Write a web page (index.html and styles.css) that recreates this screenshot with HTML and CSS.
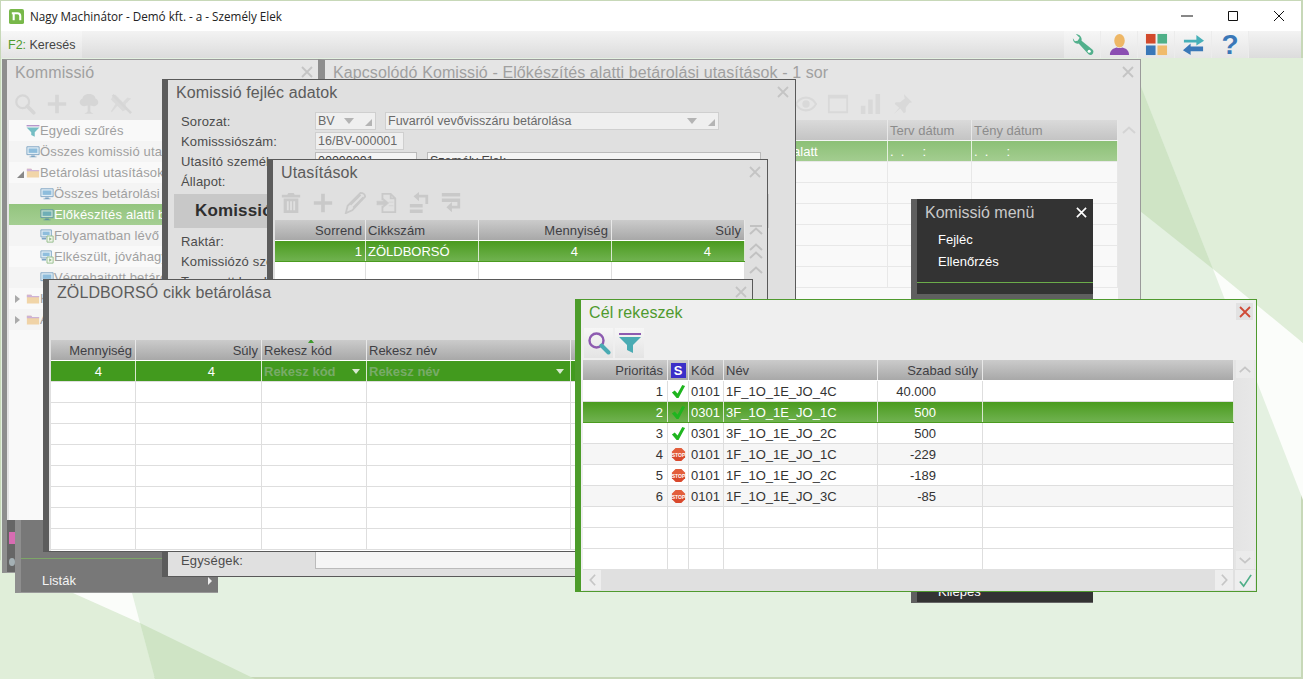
FILE: index.html
```html
<!DOCTYPE html>
<html lang="hu">
<head>
<meta charset="utf-8">
<title>Nagy Machinátor</title>
<link rel="stylesheet" href="styles.css">
</head>
<body>
<svg class="defs" aria-hidden="true">
  <symbol id="i-search" viewBox="0 0 24 24"><circle cx="9.5" cy="9.5" r="7" fill="none" stroke="currentColor" stroke-width="2.4"/><path d="M14.5 14.5l7 7" stroke="currentColor" stroke-width="4" stroke-linecap="round"/></symbol>
  <symbol id="i-plus" viewBox="0 0 24 24"><path d="M10 2h4v8h8v4h-8v8h-4v-8H2v-4h8z" fill="currentColor"/></symbol>
  <symbol id="i-tree" viewBox="0 0 24 24"><path d="M12 1c5 0 7 3 7 5 2.500 1 3.500 3 3 5-.5 3-4 4-7 3l-1.500-.5V20c0 1 1.500 1.500 3.500 2.500H7c2-1 3.500-1.500 3.500-2.500v-6.500L9 14c-3 1-6.500 0-7-3-.5-2 .5-4 3-5 0-2 2-5 7-5z" fill="currentColor"/></symbol>
  <symbol id="i-pinoff" viewBox="0 0 24 24"><path d="M2 3l2-2 20 20-2 2z" fill="currentColor"/><path d="M6 2l8 8 5-5 4 1-6 6 1 6-4 2-6-6-6 7-1-1 5-8-5-5 2-4z" fill="currentColor" opacity=".75"/></symbol>
  <symbol id="i-trash" viewBox="0 0 24 24"><path d="M8 3l1-2h6l1 2h6v3H2V3zM4 7h16v16H4zM7.500 10v10h2V10zm3.500 0v10h2V10zm3.500 0v10h2V10z" fill="currentColor" fill-rule="evenodd"/></symbol>
  <symbol id="i-pencil" viewBox="0 0 24 24"><path d="M18 1c3 0 5 2 5 4L9 20l-7 3 2-8z" fill="none" stroke="currentColor" stroke-width="2"/><path d="M7 14L18 3M10 17L21 6" stroke="currentColor" stroke-width="2"/></symbol>
  <symbol id="i-export" viewBox="0 0 24 24"><path d="M7 9V2h9l5 5v15H7v-7M16 2v5h5" fill="none" stroke="currentColor" stroke-width="2"/><path d="M1 10h7V7l6 5-6 5v-3H1zM14 11h5M14 15h5" fill="currentColor" stroke="currentColor" stroke-width=".5"/></symbol>
  <symbol id="i-swapl" viewBox="0 0 24 24"><path d="M2 13h14v4H2zM2 19h14v4H2z" fill="currentColor"/><path d="M22 3v10h-3V6h-7v4L6 4.500 12 0v3z" fill="currentColor"/></symbol>
  <symbol id="i-swapr" viewBox="0 0 24 24"><path d="M2 1h20v4H2zM2 7h20v4H2z" fill="currentColor"/><path d="M22 11v7H13v4l-6-5.500L13 11v4h6v-4z" fill="currentColor"/></symbol>
  <symbol id="i-eye" viewBox="0 0 24 24"><path d="M1 12c3-5 7-7 11-7s8 2 11 7c-3 5-7 7-11 7S4 17 1 12z" fill="none" stroke="currentColor" stroke-width="2.400"/><circle cx="12" cy="12" r="4" fill="currentColor"/></symbol>
  <symbol id="i-rect" viewBox="0 0 24 24"><path d="M2 3h20v18H2z" fill="none" stroke="currentColor" stroke-width="2"/><path d="M2 3h20v3H2z" fill="currentColor"/></symbol>
  <symbol id="i-bars" viewBox="0 0 24 24"><path d="M2 14h5v9H2zM10 7h5v16h-5zM18 1h5v22h-5z" fill="currentColor"/></symbol>
  <symbol id="i-pin" viewBox="0 0 24 24"><path d="M14 1l9 9-3 1-4 5 0 5-2 1-4-5-7 6 6-7-5-4 1-2 5 0 5-4z" fill="currentColor"/></symbol>
  <symbol id="i-funnel" viewBox="0 0 24 24"><path d="M1 2h22v2H1z" fill="#8d5bb0"/><path d="M1 6h22l-8 8v8l-6-3v-5z" fill="#4aabb3"/></symbol>
  <symbol id="i-check" viewBox="0 0 16 16"><path d="M1 9l3-2 3 3 5-9 3 1-7 13h-2z" fill="#1fb51f"/></symbol>
  <symbol id="i-stop" viewBox="0 0 16 16"><path d="M5 1h6l4 4v6l-4 4H5l-4-4V5z" fill="#d9482c"/><path d="M5 1h6l4 4v3H1V5z" fill="#ef7a50" opacity=".45"/><text x="8" y="10.200" text-anchor="middle" class="stoptext">STOP</text></symbol>
  <symbol id="i-mon" viewBox="0 0 16 16"><path d="M1 2h14v9H1z" fill="#d8eaf5" stroke="#3b78a8"/><path d="M3 4h10v5H3z" fill="#58a0d0"/><path d="M6 12h4v1h2v1H4v-1h2z" fill="#3b78a8"/></symbol>
  <symbol id="i-monp" viewBox="0 0 16 16"><path d="M1 1h12v8H1z" fill="#d8eaf5" stroke="#3b78a8"/><path d="M3 3h8v4H3z" fill="#58a0d0"/><path d="M2 10h5v2H2z" fill="#3b78a8"/><path d="M8 8h7v7H8z" fill="#eef6e8" stroke="#5a9a4a"/><path d="M10.500 9.500l3 2-3 2z" fill="#5a9a4a"/></symbol>
  <symbol id="i-folder" viewBox="0 0 16 16"><path d="M1 3h5l1 1.500h8V13H1z" fill="#eec27e"/><path d="M1 3h5l1 1.500h8V6H1z" fill="#b98fc5"/></symbol>
  <symbol id="i-x" viewBox="0 0 12 12"><path d="M1 1l10 10M11 1L1 11" fill="none" stroke="currentColor" stroke-width="1.800"/></symbol>
  <symbol id="i-up" viewBox="0 0 16 10"><path d="M2 8l6-5.500L14 8" fill="none" stroke="currentColor" stroke-width="2"/></symbol>
  <symbol id="i-down" viewBox="0 0 16 10"><path d="M2 2l6 5.500L14 2" fill="none" stroke="currentColor" stroke-width="2"/></symbol>
  <symbol id="i-left" viewBox="0 0 10 16"><path d="M8 2L2.500 8 8 14" fill="none" stroke="currentColor" stroke-width="2"/></symbol>
  <symbol id="i-right" viewBox="0 0 10 16"><path d="M2 2l5.500 6L2 14" fill="none" stroke="currentColor" stroke-width="2"/></symbol>
  <symbol id="i-tick" viewBox="0 0 16 16"><path d="M2 9l4 5L14 2" fill="none" stroke="#4fae88" stroke-width="1.800"/></symbol>
  <symbol id="i-tri" viewBox="0 0 10 6"><path d="M0 0h10L5 6z" fill="currentColor"/></symbol>
  <symbol id="i-cor" viewBox="0 0 8 8"><path d="M8 0v8H0z" fill="currentColor"/></symbol>
</svg>

<div class="app">
  <div class="screen">
    <svg class="wallpaper" viewBox="0 0 1303 679" aria-hidden="true">
      <path d="M1140 58h163v285l-90-74-73-185z" fill="#e0eed9"/>
      <path d="M1140 84l73 185-73-58z" fill="#cfe4c5"/>
      <path d="M1213 269l90 74v157z" fill="#fbfdfa"/>
      <path d="M0 560l140 63 15 56H0z" fill="#e0eed9"/>
      <path d="M73 593h59l8 30z" fill="#fbfdfa"/>
      <path d="M140 623l115 56H155z" fill="#cfe4c5"/>
    </svg>

    <header class="titlebar">
      <svg class="logo" viewBox="0 0 16 16"><rect width="16" height="16" rx="2" fill="#78b84a"/><path d="M3 4.500h3M5 12V4.500h4c2 0 3 1 3 3V12" fill="none" stroke="#fff" stroke-width="2.200"/></svg>
      <span class="apptitle">Nagy Machinátor - Demó kft. - a - Személy Elek</span>
      <div class="winctl">
        <svg class="ctl" viewBox="0 0 12 12"><path d="M0 6h12" stroke="#111" fill="none"/></svg>
        <svg class="ctl" viewBox="0 0 12 12"><path d="M1.500 1.500h9v9h-9z" stroke="#111" fill="none"/></svg>
        <svg class="ctl" viewBox="0 0 12 12"><path d="M1 1l10 10M11 1L1 11" stroke="#111" fill="none"/></svg>
      </div>
    </header>

    <nav class="toolbar">
      <div class="f2"><span class="f2key">F2:</span> Keresés</div>
      <div class="tools">
        <div class="tool"><svg class="toolic" viewBox="0 0 24 24"><path d="M2 6c0 3 3 6 6 5l10 11c2 1.500 4 1 5-1s0-3-1-4L11 8c1-3-2-7-6-7l4 4-2 3-3 .5-2-3z" fill="#52b08c"/><circle cx="19" cy="19" r="1.600" fill="#fff"/></svg></div>
        <div class="tool"><svg class="toolic" viewBox="0 0 24 24"><ellipse cx="12" cy="8" rx="5.500" ry="7" fill="#eeb766"/><path d="M2 23c0-5 3-7 7-8 2 1 4 1 6 0 4 1 7 3 7 8z" fill="#8b4fb2"/></svg></div>
        <div class="tool"><svg class="toolic" viewBox="0 0 24 24"><path d="M1 1h10v10H1z" fill="#d24a2c"/><path d="M13 1h10v10H13z" fill="#4fb088"/><path d="M1 13h10v10H1z" fill="#3a78b8"/><path d="M13 13h10v10H13z" fill="#f0bb6c"/></svg></div>
        <div class="tool"><svg class="toolic" viewBox="0 0 24 24"><path d="M2 7h13V2l8 6-8 5V10H2z" fill="#46b0b8"/><path d="M22 14H9v-3l-8 7 8 5v-4h13z" fill="#3a78b8"/></svg></div>
        <div class="tool"><span class="qmark">?</span></div>
      </div>
    </nav>

    <section class="win dim w-kom">
      <h2 class="win-title">Kommissió</h2>
      <svg class="close"><use href="#i-x"/></svg>
      <div class="iconbar iconbar-kom">
        <svg class="ib"><use href="#i-search"/></svg>
        <svg class="ib"><use href="#i-plus"/></svg>
        <svg class="ib"><use href="#i-tree"/></svg>
        <svg class="ib"><use href="#i-pinoff"/></svg>
      </div>
      <ul class="tree">
        <li class="node l1"><svg class="ni ni-f"><use href="#i-funnel"/></svg>Egyedi szűrés</li>
        <li class="node l1"><svg class="ni"><use href="#i-mon"/></svg>Összes komissió utasítás</li>
        <li class="node l1"><span class="exp open"></span><svg class="ni"><use href="#i-folder"/></svg>Betárolási utasítások</li>
        <li class="node l2"><svg class="ni"><use href="#i-mon"/></svg>Összes betárolási utasítás</li>
        <li class="node l2 sel"><svg class="ni"><use href="#i-mon"/></svg>Előkészítés alatti betárolási</li>
        <li class="node l2"><svg class="ni"><use href="#i-monp"/></svg>Folyamatban lévő betárolási</li>
        <li class="node l2"><svg class="ni"><use href="#i-monp"/></svg>Elkészült, jóváhagyott</li>
        <li class="node l2"><svg class="ni"><use href="#i-mon"/></svg>Végrehajtott betárolási</li>
        <li class="node l1"><span class="exp"></span><svg class="ni"><use href="#i-folder"/></svg>Kiadási utasítások</li>
        <li class="node l1"><span class="exp"></span><svg class="ni"><use href="#i-folder"/></svg>Áttárolási utasítások</li>
      </ul>
      <div class="kom-foot">
        <span class="foot-a"></span>
        <span class="foot-b"></span>
      </div>
    </section>

    <section class="win dim w-kap">
      <h2 class="win-title">Kapcsolódó Komissió - Előkészítés alatti betárolási utasítások - 1 sor</h2>
      <svg class="close"><use href="#i-x"/></svg>
      <div class="iconbar iconbar-kap">
        <svg class="ib"><use href="#i-eye"/></svg>
        <svg class="ib"><use href="#i-rect"/></svg>
        <svg class="ib"><use href="#i-bars"/></svg>
        <svg class="ib"><use href="#i-pin"/></svg>
      </div>
      <div class="gridwrap">
        <div class="grid g-kap">
          <div class="row head"><div class="c"></div><div class="c"></div><div class="c">Terv dátum</div><div class="c">Tény dátum</div></div>
          <div class="row sel-soft"><div class="c"></div><div class="c">Előkészítés alatt</div><div class="c pre">.  .     :</div><div class="c pre">.  .     :</div></div>
          <div class="row"><div class="c"></div><div class="c"></div><div class="c"></div><div class="c"></div></div>
          <div class="row"><div class="c"></div><div class="c"></div><div class="c"></div><div class="c"></div></div>
          <div class="row"><div class="c"></div><div class="c"></div><div class="c"></div><div class="c"></div></div>
          <div class="row"><div class="c"></div><div class="c"></div><div class="c"></div><div class="c"></div></div>
          <div class="row"><div class="c"></div><div class="c"></div><div class="c"></div><div class="c"></div></div>
          <div class="row"><div class="c"></div><div class="c"></div><div class="c"></div><div class="c"></div></div>
        </div>
        <div class="vscroll"><svg class="sb-ic"><use href="#i-up"/></svg></div>
      </div>
    </section>

    <aside class="darkmenu w-komenu">
      <div class="dm-head"><span>Komissió menü</span><svg class="dm-x"><use href="#i-x"/></svg></div>
      <div class="dm-item">Fejléc</div>
      <div class="dm-item">Ellenőrzés</div>
      <div class="dm-line"></div>
      <div class="dm-band"></div>
      <div class="dm-item dm-last">Kilépés</div>
    </aside>

    <aside class="w-listak">
      <div class="list-line"></div>
      <div class="list-item"><span>Listák</span><span class="list-arrow"></span></div>
    </aside>

    <section class="win dark w-fej">
      <h2 class="win-title">Komissió fejléc adatok</h2>
      <svg class="close"><use href="#i-x"/></svg>
      <div class="form">
        <div class="frow"><label class="flabel">Sorozat:</label><span class="fld sel-fld f-bv">BV<svg class="tri"><use href="#i-tri"/></svg><svg class="cor"><use href="#i-cor"/></svg></span><span class="fld sel-fld f-fuv">Fuvarról vevővisszáru betárolása<svg class="tri"><use href="#i-tri"/></svg><svg class="cor"><use href="#i-cor"/></svg></span></div>
        <div class="frow"><label class="flabel">Komisssiószám:</label><span class="fld f-sz">16/BV-000001</span></div>
        <div class="frow"><label class="flabel">Utasító személy:</label><span class="fld f-ut">00000001</span><span class="fld f-nev">Személy Elek</span></div>
        <div class="frow"><label class="flabel">Állapot:</label></div>
        <div class="banner">Komissió</div>
        <div class="frow"><label class="flabel">Raktár:</label></div>
        <div class="frow"><label class="flabel">Komissiózó személy:</label></div>
        <div class="frow"><label class="flabel">Tervezett kezdés:</label></div>
        <div class="frow frow-end"><label class="flabel">Egységek:</label><span class="fld f-egy"></span></div>
      </div>
    </section>

    <section class="win dark w-uta">
      <h2 class="win-title">Utasítások</h2>
      <svg class="close"><use href="#i-x"/></svg>
      <div class="iconbar iconbar-uta">
        <svg class="ib"><use href="#i-trash"/></svg>
        <svg class="ib"><use href="#i-plus"/></svg>
        <svg class="ib"><use href="#i-pencil"/></svg>
        <svg class="ib"><use href="#i-export"/></svg>
        <svg class="ib"><use href="#i-swapl"/></svg>
        <svg class="ib"><use href="#i-swapr"/></svg>
      </div>
      <div class="gridwrap">
        <div class="grid g-uta">
          <div class="row head"><div class="c r">Sorrend</div><div class="c">Cikkszám</div><div class="c r">Mennyiség</div><div class="c r">Súly</div></div>
          <div class="row sel"><div class="c r">1</div><div class="c">ZÖLDBORSÓ</div><div class="c r pad4">4</div><div class="c r pad4">4</div></div>
          <div class="row"><div class="c"></div><div class="c"></div><div class="c"></div><div class="c"></div></div>
          <div class="row"><div class="c"></div><div class="c"></div><div class="c"></div><div class="c"></div></div>
        </div>
        <div class="vscroll vs-uta">
          <span class="vs-top"><svg class="sb-ic"><use href="#i-up"/></svg></span>
          <span class="vs-dbl"><svg class="sb-ic"><use href="#i-up"/></svg><svg class="sb-ic"><use href="#i-up"/></svg></span>
          <svg class="sb-ic"><use href="#i-up"/></svg>
        </div>
      </div>
    </section>

    <section class="win dark w-zol">
      <h2 class="win-title">ZÖLDBORSÓ cikk betárolása</h2>
      <svg class="close"><use href="#i-x"/></svg>
      <div class="spacer-zol"></div>
      <div class="grid g-zol">
        <div class="row head"><div class="c r">Mennyiség</div><div class="c r">Súly</div><div class="c">Rekesz kód<span class="sortmark"></span></div><div class="c">Rekesz név</div><div class="c"></div></div>
        <div class="row sel-solid"><div class="c r pad30">4</div><div class="c r pad46">4</div><div class="c editc"><b>Rekesz kód</b><svg class="tri"><use href="#i-tri"/></svg></div><div class="c editc"><b>Rekesz név</b><svg class="tri"><use href="#i-tri"/></svg></div><div class="c"></div></div>
        <div class="row"><div class="c"></div><div class="c"></div><div class="c"></div><div class="c"></div><div class="c"></div></div>
        <div class="row"><div class="c"></div><div class="c"></div><div class="c"></div><div class="c"></div><div class="c"></div></div>
        <div class="row"><div class="c"></div><div class="c"></div><div class="c"></div><div class="c"></div><div class="c"></div></div>
        <div class="row"><div class="c"></div><div class="c"></div><div class="c"></div><div class="c"></div><div class="c"></div></div>
        <div class="row"><div class="c"></div><div class="c"></div><div class="c"></div><div class="c"></div><div class="c"></div></div>
        <div class="row"><div class="c"></div><div class="c"></div><div class="c"></div><div class="c"></div><div class="c"></div></div>
        <div class="row"><div class="c"></div><div class="c"></div><div class="c"></div><div class="c"></div><div class="c"></div></div>
        <div class="row"><div class="c"></div><div class="c"></div><div class="c"></div><div class="c"></div><div class="c"></div></div>
      </div>
    </section>

    <section class="win active w-cel">
      <h2 class="win-title">Cél rekeszek</h2>
      <span class="close-btn"><svg class="close-red"><use href="#i-x"/></svg></span>
      <div class="btnbar">
        <span class="btn"><svg class="btn-ic" viewBox="0 0 24 24"><circle cx="9.500" cy="9.500" r="7" fill="none" stroke="#8d5bb0" stroke-width="2.400"/><path d="M14.500 14.500l7 7" stroke="#4aabb3" stroke-width="4" stroke-linecap="round"/></svg></span>
        <span class="btn"><svg class="btn-ic"><use href="#i-funnel"/></svg></span>
      </div>
      <div class="gridwrap">
        <div class="grid g-cel">
          <div class="row head"><div class="c r">Prioritás</div><div class="c ctr"><span class="sbadge">S</span></div><div class="c">Kód</div><div class="c">Név</div><div class="c r">Szabad súly</div><div class="c"></div></div>
          <div class="row"><div class="c r">1</div><div class="c ctr"><svg class="st"><use href="#i-check"/></svg></div><div class="c">0101</div><div class="c">1F_1O_1E_JO_4C</div><div class="c r pad46">40.000</div><div class="c"></div></div>
          <div class="row sel"><div class="c r">2</div><div class="c ctr"><svg class="st"><use href="#i-check"/></svg></div><div class="c">0301</div><div class="c">3F_1O_1E_JO_1C</div><div class="c r pad46">500</div><div class="c"></div></div>
          <div class="row"><div class="c r">3</div><div class="c ctr"><svg class="st"><use href="#i-check"/></svg></div><div class="c">0301</div><div class="c">3F_1O_1E_JO_2C</div><div class="c r pad46">500</div><div class="c"></div></div>
          <div class="row alt"><div class="c r">4</div><div class="c ctr"><svg class="st"><use href="#i-stop"/></svg></div><div class="c">0101</div><div class="c">1F_1O_1E_JO_1C</div><div class="c r pad46">-229</div><div class="c"></div></div>
          <div class="row"><div class="c r">5</div><div class="c ctr"><svg class="st"><use href="#i-stop"/></svg></div><div class="c">0101</div><div class="c">1F_1O_1E_JO_2C</div><div class="c r pad46">-189</div><div class="c"></div></div>
          <div class="row alt"><div class="c r">6</div><div class="c ctr"><svg class="st"><use href="#i-stop"/></svg></div><div class="c">0101</div><div class="c">1F_1O_1E_JO_3C</div><div class="c r pad46">-85</div><div class="c"></div></div>
          <div class="row"><div class="c"></div><div class="c"></div><div class="c"></div><div class="c"></div><div class="c"></div><div class="c"></div></div>
          <div class="row"><div class="c"></div><div class="c"></div><div class="c"></div><div class="c"></div><div class="c"></div><div class="c"></div></div>
          <div class="row"><div class="c"></div><div class="c"></div><div class="c"></div><div class="c"></div><div class="c"></div><div class="c"></div></div>
        </div>
        <div class="vscroll vs-cel">
          <span class="sb-btn"><svg class="sb-ic"><use href="#i-up"/></svg></span>
          <span class="sb-btn"><svg class="sb-ic"><use href="#i-down"/></svg></span>
        </div>
      </div>
      <div class="hscroll">
        <span class="sb-btn sb-h"><svg class="sb-ih"><use href="#i-left"/></svg></span>
        <span class="sb-btn sb-h sb-push"><svg class="sb-ih"><use href="#i-right"/></svg></span>
        <span class="sb-btn sb-ok"><svg class="sb-tick"><use href="#i-tick"/></svg></span>
      </div>
    </section>
  </div>
</div>
</body>
</html>
```
FILE: styles.css
```css
* { box-sizing: border-box; }
html, body { margin: 0; padding: 0; height: 100%; overflow: hidden; }
body { font-family: "Liberation Sans", Arial, sans-serif; font-size: 13px; color: #333; background: #c7d8b8; }
.defs { position: absolute; width: 0; height: 0; overflow: hidden; }
.stoptext { font-family: "Liberation Sans", Arial, sans-serif; font-size: 5.4px; font-weight: bold; fill: #fff; }

.app { width: 1303px; height: 679px; padding: 1px 2px 2px 1px; background: #c7d8b8; position: relative; }
.screen { width: 100%; height: 100%; display: flex; flex-direction: column; background: #e4f1e1; }
.wallpaper { position: absolute; left: 0; top: 0; width: 1303px; height: 679px; }

.titlebar { position: relative; height: 30px; background: #fff; display: flex; align-items: center; padding-left: 8px; flex: none; }
.logo { width: 15px; height: 15px; margin-right: 6px; }
.apptitle { font-family: "Open Sans", sans-serif; font-size: 11.7px; color: #222; }
.winctl { margin-left: auto; display: flex; align-items: center; margin-right: 16px; gap: 34px; }
.ctl { width: 12px; height: 12px; display: block; }

.toolbar { position: relative; height: 27px; flex: none; display: flex; align-items: stretch; background: linear-gradient(#f3f3f3, #dcdcdc); }
.f2 { width: 81px; padding-left: 7px; line-height: 28px; font-size: 12.5px; color: #444; background: linear-gradient(#f7f7f7, #e4e4e4); }
.f2key { color: #4f9a2e; }
.tools { margin-left: auto; margin-right: 52px; display: flex; }
.tool { width: 37px; height: 27px; display: flex; align-items: center; justify-content: center; background: linear-gradient(#f6f6f6, #e6e6e6); border-right: 1px solid #ececec; }
.toolic { width: 23px; height: 23px; }
.qmark { font-weight: bold; font-size: 28px; line-height: 27px; color: #3a78b8; }

.win { position: absolute; overflow: hidden; display: flex; flex-direction: column; border-style: solid; border-width: 1px; }
.win-title { margin: 0; font-weight: normal; font-size: 16px; line-height: 25px; padding: 0 0 0 8px; height: 26px; flex: none; white-space: nowrap; letter-spacing: 0.1px; }
.close { position: absolute; top: 6px; right: 6px; width: 12px; height: 12px; color: #c4c4c4; }

.dim { background: #e5e5e5; border-color: #9a9a9a; border-left: 7px solid #8e8e8e; color: #a0a0a0; }
.dark { background: #e0e0e0; border-color: #595959; border-left: 6px solid #5c5c5c; color: #4c4c4c; }
.dark .win-title { color: #5c5c5c; }
.active { background: #efefef; border-color: #4f9a2e; border-left: 6px solid #4c9c2a; color: #333; }
.active .win-title { color: #4f9a2e; }

.w-kom { left: 2px; top: 59px; width: 317px; height: 514px; border-left-width: 5px; border-right: 0; }
.w-kap { left: 318px; top: 59px; width: 823px; height: 516px; }
.w-fej { left: 162px; top: 79px; width: 634px; height: 498px; }
.w-uta { left: 267px; top: 159px; width: 501px; height: 200px; }
.w-zol { left: 43px; top: 279px; width: 710px; height: 273px; }
.w-cel { left: 575px; top: 299px; width: 682px; height: 293px; }
.w-komenu { position: absolute; left: 911px; top: 199px; width: 182px; height: 404px; }
.w-listak { position: absolute; left: 15px; top: 520px; width: 203px; height: 73px; background: #787878; border-left: 6px solid #8e8e8e; border-bottom: 1px solid #999; display: flex; flex-direction: column; justify-content: flex-end; }
.w-zol .close { right: 5px; }

.iconbar { display: flex; flex: none; color: #d6d6d6; }
.ib { width: 22px; height: 22px; margin-right: 10px; }
.iconbar-kom { height: 34px; padding: 7px 0 0 7px; }
.iconbar-kap { height: 34px; padding: 7px 0 0 470px; color: #d9d9d9; }
.iconbar-uta { height: 34px; padding: 6px 0 0 7px; color: #c9c9c9; }

.tree { list-style: none; margin: 0 0 0 2px; padding: 0; flex: 1; background: #f9f9f9; font-size: 13px; }
.node { height: 21px; line-height: 21px; display: flex; align-items: center; white-space: nowrap; position: relative; letter-spacing: .15px; }
.node:nth-child(even) { background: #f4f4f4; }
.l1 { padding-left: 17px; }
.l2 { padding-left: 31px; }
.node.sel { background: linear-gradient(#93c47e, #a5cf93); color: #fff; }
.ni { width: 14px; height: 14px; flex: none; opacity: .65; }
.ni-f { opacity: .75; }
.exp { position: absolute; left: 6px; top: 7px; width: 0; height: 0; border-style: solid; border-width: 4px 0 4px 5px; border-color: transparent transparent transparent #aaa; }
.exp.open { left: 8px; top: 9px; border-width: 0 0 7px 7px; border-color: transparent transparent #888 transparent; }
.kom-foot { height: 52px; flex: none; background: #666; position: relative; }
.foot-a { position: absolute; left: 2px; top: 12px; width: 6px; height: 12px; background: #d76cb2; }
.foot-b { position: absolute; left: 2px; top: 38px; width: 6px; height: 8px; border-radius: 50%; background: #a4b0b4; }

.gridwrap { display: flex; flex: 1; min-height: 0; }
.grid { flex: none; overflow: hidden; background: #fff; }
.row { display: grid; height: 21px; border-bottom: 1px solid #dedede; background: #fff; }
.c { border-right: 1px solid #dedede; padding: 0 3px 0 2px; line-height: 21px; white-space: nowrap; overflow: hidden; }
.r { text-align: right; }
.ctr { display: flex; align-items: center; justify-content: center; padding: 0; }
.pre { white-space: pre; color: #fff; }
.pad4 { padding-right: 33px; }
.pad30 { padding-right: 33px; }
.pad46 { padding-right: 46px; }
.head { background: linear-gradient(#cbcbcb, #a8a8a8); border-bottom-color: #fff; color: #3f3f44; }
.head .c { border-right-color: #e8e8e8; }
.row.sel { background: linear-gradient(#4a9b1e, #70b250); color: #fff; border-bottom-color: #4a9b1e; }
.row.sel .c { border-right-color: #d9e8d0; }
.row.sel-solid { background: #429a1e; color: #fff; border-bottom-color: #dedede; }
.row.sel-solid .c { border-right-color: #d9e8d0; }
.row.alt { background: #f6f6f6; }

.g-uta { width: 470px; margin-left: 2px; }
.g-uta .row { grid-template-columns: 91px 113px 133px 133px; }
.g-uta .head .c { letter-spacing: .1px; }
.g-zol { width: 700px; margin-left: 2px; flex: 1; }
.g-zol .row { grid-template-columns: 85px 126px 105px 204px 180px; }
.g-cel { width: 651px; margin-left: 2px; }
.g-cel .row { grid-template-columns: 85px 21px 35px 154px 105px 251px; }
.g-cel .c.r:not(.pad46) { padding-right: 4px; }
.g-kap { width: 793px; background: #f9f9f9; }
.g-kap .row { grid-template-columns: 396px 167px 84px 146px; background: #f9f9f9; border-bottom-color: #e8e8e8; }
.g-kap .c { border-right-color: #e8e8e8; }
.g-kap .row .c:first-child { border-right-color: transparent; }
.g-kap .head { background: linear-gradient(#dadada, #c4c4c4); color: #8c8c8c; border-bottom-color: #f5f5f5; }
.g-kap .sel-soft { background: linear-gradient(#8cc076, #a3cd90); color: #fff; }
.g-kap .sel-soft .c { border-right-color: #e4f0dd; }

.spacer-zol { height: 34px; flex: none; }
.sortmark { position: absolute; width: 0; height: 0; margin: -1px 0 0 -24px; border-style: solid; border-width: 0 3px 4px 3px; border-color: transparent transparent #3f9a2e transparent; }
.g-zol .row:first-child .c:nth-child(3) { position: relative; }
.editc { position: relative; color: #76a866; }
.editc b { font-weight: bold; color: #78ab68; }
.editc .tri { position: absolute; right: 6px; top: 8px; width: 8px; height: 5px; color: #d8ead0; }

.vscroll { flex: 1; min-width: 0; display: flex; flex-direction: column; align-items: center; color: #d0d0d0; background: #e6e6e6; }
.sb-ic { width: 16px; height: 10px; display: block; margin-top: 5px; }
.w-kap .vscroll .sb-ic { color: #d4d4d4; }
.vs-uta { background: #e0e0e0; gap: 1px; color: #c2c2c2; }
.vs-uta .vs-top { display: block; height: 19px; position: relative; }
.vs-top::before { content: ""; position: absolute; left: 2px; right: 2px; top: 5px; border-top: 2px solid #c2c2c2; }
.vs-top .sb-ic { margin-top: 6px; }
.vs-dbl { display: block; height: 19px; }
.vs-dbl .sb-ic { margin-top: -2px; }
.vs-dbl .sb-ic:first-child { margin-top: 2px; }
.vs-cel { justify-content: space-between; background: linear-gradient(90deg, #e4e4e4, #e8e8e8); color: #c6c6c6; }
.sb-btn { display: flex; align-items: center; justify-content: center; background: #eeeeee; width: 18px; height: 18px; }
.vs-cel .sb-btn { background: #ebebeb; }
.vs-cel .sb-btn .sb-ic { margin-top: 0; width: 14px; height: 9px; }
.hscroll { height: 22px; flex: none; display: flex; align-items: center; margin-left: 2px; background: #e0e0e0; padding-right: 1px; color: #c6c6c6; }
.sb-h { width: 18px; height: 20px; }
.sb-ih { width: 9px; height: 14px; }
.sb-push { margin-left: auto; }
.sb-ok { width: 20px; height: 20px; margin-left: 2px; }
.sb-tick { width: 15px; height: 15px; }

.form { flex: 1; display: flex; flex-direction: column; padding: 5px 0 6px 13px; color: #4c4c4c; min-height: 0; letter-spacing: .15px; }
.frow { display: flex; align-items: center; height: 20px; flex: none; }
.frow-end { margin-top: auto; }
.flabel { width: 134px; flex: none; white-space: nowrap; }
.fld { display: block; position: relative; height: 18px; line-height: 16px; padding-left: 2px; border: 1px solid #cfcfcf; background: #efefef; white-space: nowrap; color: #6a6a6a; font-size: 12.5px; letter-spacing: 0; }
.f-bv { width: 61px; }
.f-fuv { width: 334px; margin-left: 9px; }
.f-sz { width: 89px; }
.f-ut { width: 102px; background: #f4f4f4; border-color: #bbb; color: #444; }
.f-nev { width: 334px; margin-left: 10px; background: #f4f4f4; border-color: #bbb; color: #444; }
.f-egy { width: 300px; background: #f5f5f5; border-color: #bbb; }
.tri { position: absolute; right: 21px; top: 5px; width: 10px; height: 6px; color: #b4b4b4; }
.cor { position: absolute; right: 3px; top: 6px; width: 7px; height: 7px; color: #b4b4b4; }
.banner { margin: 3px 0 3px -7px; width: 595px; height: 34px; flex: none; line-height: 34px; padding-left: 21px; font-size: 17px; font-weight: bold; color: #2e2e2e; background: #c8c8c8; white-space: nowrap; }

.darkmenu { background: #333; border-left: 6px solid #5f5f5f; border-bottom: 1px solid #666; color: #fff; display: flex; flex-direction: column; overflow: hidden; }
.dm-head { height: 30px; padding: 0 6px 3px 8px; font-size: 16px; line-height: 26px; color: #c9c9c9; display: flex; justify-content: space-between; align-items: center; flex: none; }
.dm-x { width: 11px; height: 11px; color: #fff; }
.dm-item { height: 22px; line-height: 22px; padding-left: 21px; flex: none; }
.dm-line { margin-top: 9px; border-top: 1px solid #6bab4a; height: 12px; flex: none; }
.dm-band { height: 5px; background: #5f5f5f; flex: none; }
.dm-last { margin-top: auto; height: 21px; line-height: 21px; }

.list-line { height: 1px; background: #7da667; margin-bottom: 10px; }
.list-item { line-height: 23px; height: 23px; color: #f4f4f4; padding-left: 21px; padding-right: 6px; display: flex; justify-content: space-between; align-items: center; }
.list-arrow { width: 0; height: 0; border-style: solid; border-width: 4px 0 4px 4px; border-color: transparent transparent transparent #eee; }

.close-btn { position: absolute; top: 3px; right: 3px; width: 17px; height: 17px; background: #e2e2e2; display: flex; align-items: center; justify-content: center; }
.close-red { width: 12px; height: 12px; color: #cf4a36; }
.btnbar { height: 34px; flex: none; display: flex; gap: 2px; padding: 2px 0 0 3px; }
.btn { width: 29px; height: 30px; background: linear-gradient(#f6f6f6, #e4e4e4); display: flex; align-items: center; justify-content: center; }
.btn-ic { width: 24px; height: 24px; }
.sbadge { width: 15px; height: 15px; background: #3b2fc8; color: #fff; font-weight: bold; font-size: 13px; line-height: 15px; text-align: center; }
.st { width: 15px; height: 15px; }
```
